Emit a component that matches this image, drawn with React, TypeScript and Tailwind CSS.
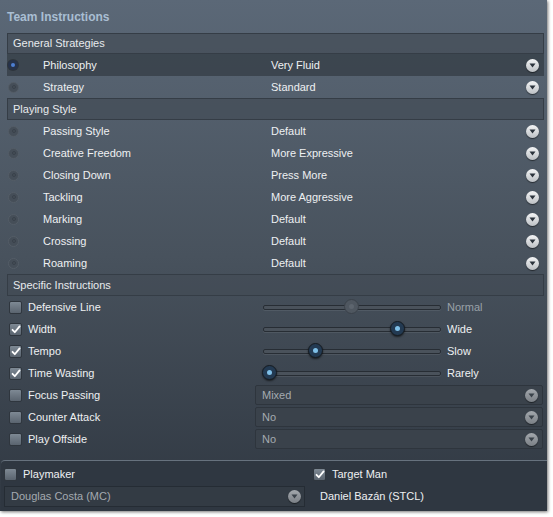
import React from "react";

const general = [
  { label: "Philosophy", value: "Very Fluid", on: true },
  { label: "Strategy", value: "Standard", on: false },
];

const playing = [
  ["Passing Style", "Default"],
  ["Creative Freedom", "More Expressive"],
  ["Closing Down", "Press More"],
  ["Tackling", "More Aggressive"],
  ["Marking", "Default"],
  ["Crossing", "Default"],
  ["Roaming", "Default"],
];

type Specific =
  | { label: string; checked: boolean; kind: "slider"; pos: number; value: string; dim?: boolean }
  | { label: string; checked: boolean; kind: "select"; value: string };

const specific: Specific[] = [
  { label: "Defensive Line", checked: false, kind: "slider", pos: 88, value: "Normal", dim: true },
  { label: "Width", checked: true, kind: "slider", pos: 134, value: "Wide" },
  { label: "Tempo", checked: true, kind: "slider", pos: 52, value: "Slow" },
  { label: "Time Wasting", checked: true, kind: "slider", pos: 6, value: "Rarely" },
  { label: "Focus Passing", checked: false, kind: "select", value: "Mixed" },
  { label: "Counter Attack", checked: false, kind: "select", value: "No" },
  { label: "Play Offside", checked: false, kind: "select", value: "No" },
];

function Arrow({ dim }: { dim?: boolean }) {
  return (
    <span
      className={
        dim
          ? "grid h-[13px] w-[13px] place-items-center rounded-full bg-linear-to-b from-[#a3a8ad] to-[#7b8086] shadow-[0_1px_1px_rgba(0,0,0,0.5)]"
          : "grid h-[13px] w-[13px] place-items-center rounded-full bg-linear-to-b from-[#f4f5f6] to-[#bcc0c4] shadow-[0_1px_1px_rgba(0,0,0,0.5)]"
      }
    >
      <svg width="7" height="5" viewBox="0 0 7 5">
        <path d="M0.5 0.5h6L3.5 4.5z" fill={dim ? "#3a424a" : "#2b333c"} />
      </svg>
    </span>
  );
}

function Radio({ on }: { on: boolean }) {
  if (on) {
    return (
      <span className="grid h-[10px] w-[10px] place-items-center rounded-full bg-[#26324a] shadow-[0_0_0_1px_rgba(0,0,0,0.25)]">
        <span className="h-[4px] w-[4px] rounded-full bg-[#4d7fd2]" />
      </span>
    );
  }
  return (
    <span className="grid h-[11px] w-[11px] place-items-center rounded-full border border-[#545d67] bg-[#454e58]">
      <span className="h-[4px] w-[4px] rounded-full border border-[#3a424b]" />
    </span>
  );
}

function Check({ on }: { on: boolean }) {
  return (
    <span className="grid h-[13px] w-[13px] shrink-0 place-items-center rounded-[2px] border border-[#2f363e] bg-linear-to-b from-[#7e8994] to-[#5a646f]">
      {on && (
        <svg width="10" height="9" viewBox="0 0 10 9">
          <path d="M1.5 4.8l2.3 2.4L8.6 1.4" fill="none" stroke="#fff" strokeWidth="1.8" strokeLinecap="round" strokeLinejoin="round" />
        </svg>
      )}
    </span>
  );
}

function Slider({ pos, dim }: { pos: number; dim?: boolean }) {
  return (
    <div className="relative h-[16px] w-[178px] shrink-0">
      <div className="absolute left-0 right-0 top-[6px] h-[5px] rounded-[2px] border border-[#272d34] bg-[#4a525b] shadow-[0_1px_0_rgba(255,255,255,0.08)]" />
      {dim ? (
        <span
          className="absolute top-0 grid h-[15px] w-[15px] place-items-center rounded-full border border-[#3a4149] bg-[#4f5760]"
          style={{ left: pos - 7 }}
        >
          <span className="h-[5px] w-[5px] rounded-full bg-[#5d656e]" />
        </span>
      ) : (
        <span
          className="absolute top-0 grid h-[15px] w-[15px] place-items-center rounded-full border border-[#161c22] bg-[#233a52] shadow-[0_1px_2px_rgba(0,0,0,0.6)]"
          style={{ left: pos - 7 }}
        >
          <span className="h-[5px] w-[5px] rounded-full bg-[#7fc0e8]" />
        </span>
      )}
    </div>
  );
}

function Header({ title, h }: { title: string; h: string }) {
  return (
    <div className={`flex items-center border border-[#353d46] bg-[#434c56]/70 pl-[5px] text-[#e7eaed] ${h}`}>
      {title}
    </div>
  );
}

export default function App() {
  return (
    <div className="h-[517px] w-[553px] bg-white font-['Liberation_Sans',Arial,sans-serif] text-[11px] leading-none">
      <div className="flex h-[511px] w-[547px] flex-col bg-linear-to-b from-[#5b6877] via-[#48525d] to-[#303842] shadow-[1px_1px_3px_rgba(0,0,0,0.55)]">
        <div className="flex h-[33px] items-center pl-[7px] text-[12px] font-bold text-[#a9bed3]">Team Instructions</div>

        <div className="ml-[7px] w-[537px]">
          <Header title="General Strategies" h="h-[21px]" />
          {general.map((r) => (
            <div key={r.label} className={r.on ? "flex h-[22px] items-center bg-[#363e47]/80" : "flex h-[22px] items-center"}>
              <span className="ml-[1px] w-[35px]">
                <Radio on={r.on} />
              </span>
              <span className="w-[228px] text-[#eef0f2]">{r.label}</span>
              <span className="flex-1 text-[#eef0f2]">{r.value}</span>
              <span className="mr-[5px]">
                <Arrow />
              </span>
            </div>
          ))}

          <Header title="Playing Style" h="h-[22px]" />
          {playing.map(([label, value]) => (
            <div key={label} className="flex h-[22px] items-center">
              <span className="ml-[1px] w-[35px]">
                <Radio on={false} />
              </span>
              <span className="w-[228px] text-[#eef0f2]">{label}</span>
              <span className="flex-1 text-[#eef0f2]">{value}</span>
              <span className="mr-[5px]">
                <Arrow />
              </span>
            </div>
          ))}

          <Header title="Specific Instructions" h="h-[22px]" />
          {specific.map((r) => (
            <div key={r.label} className="flex h-[22px] items-center">
              <span className="ml-[2px] flex w-[246px] items-center gap-[6px]">
                <Check on={r.checked} />
                <span className="text-[#eef0f2]">{r.label}</span>
              </span>
              {r.kind === "slider" ? (
                <>
                  <span className="ml-[8px]">
                    <Slider pos={r.pos} dim={r.dim} />
                  </span>
                  <span className={r.dim ? "ml-[6px] text-[#9aa1a8]" : "ml-[6px] text-[#eef0f2]"}>{r.value}</span>
                </>
              ) : (
                <div className="flex h-[20px] w-[288px] items-center justify-between rounded-[2px] border border-[#2e353d] bg-[#3a424b] pl-[6px] pr-[4px] text-[#a4aab0]">
                  <span>{r.value}</span>
                  <Arrow dim />
                </div>
              )}
            </div>
          ))}
        </div>

        <div className="mt-[10px] ml-[1px] flex flex-1 flex-col rounded-tl-[4px] border-t border-[#67727e] bg-[#2f3741] pt-[2px]">
          <div className="flex h-[22px] items-center">
            <span className="ml-[3px] flex w-[309px] items-center gap-[6px]">
              <Check on={false} />
              <span className="text-[#eef0f2]">Playmaker</span>
            </span>
            <span className="flex items-center gap-[6px]">
              <Check on={true} />
              <span className="text-[#eef0f2]">Target Man</span>
            </span>
          </div>
          <div className="flex h-[22px] items-center">
            <div className="ml-[3px] flex h-[21px] w-[301px] items-center justify-between border border-[#252c34] bg-[#333b44] pl-[6px] pr-[3px] text-[#a4aab0]">
              <span>Douglas Costa (MC)</span>
              <Arrow dim />
            </div>
            <span className="ml-[15px] text-[#eef0f2]">Daniel Bazán (STCL)</span>
          </div>
        </div>
      </div>
    </div>
  );
}
